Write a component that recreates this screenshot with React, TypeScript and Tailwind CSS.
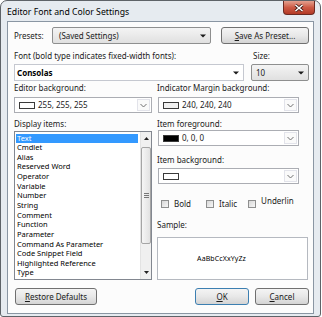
import React from "react";

const items = [
  "Text",
  "Cmdlet",
  "Alias",
  "Reserved Word",
  "Operator",
  "Variable",
  "Number",
  "String",
  "Comment",
  "Function",
  "Parameter",
  "Command As Parameter",
  "Code Snippet Field",
  "Highlighted Reference",
  "Type",
];

function Tri() {
  return (
    <svg width="6" height="4" viewBox="0 0 6 4">
      <path d="M0 0.5h6L3 3.5z" fill="#1a1a1a" />
    </svg>
  );
}

function Chevron() {
  return (
    <svg width="7" height="5" viewBox="0 0 7 5">
      <path d="M0.5 1L3.5 4L6.5 1" fill="none" stroke="#707070" strokeWidth="1" />
    </svg>
  );
}

function ColorCombo({ swatch, label }: { swatch: string; label: string }) {
  return (
    <div className="flex h-[16px] border border-[#abadb3] bg-white">
      <div className="flex flex-1 items-center gap-[3px] pl-[4px]">
        <span className={`h-[7px] w-[16px] border border-[#3a3a3a] ${swatch}`} />
        <span>{label}</span>
      </div>
      <div className="m-[1px] flex w-[13px] items-center justify-center border border-[#e2e3ea] bg-[#fafafa]">
        <Chevron />
      </div>
    </div>
  );
}

function Check({ label, raised }: { label: string; raised?: boolean }) {
  return (
    <div className="flex items-center gap-[5px]">
      <span className="h-[8px] w-[8px] border border-[#8e8f8f] bg-linear-to-br from-[#d8d8d8] to-[#f7f7f7]" />
      <span className={raised ? "-mt-[6px]" : ""}>{label}</span>
    </div>
  );
}

function Btn({ children, w, def }: { children: React.ReactNode; w: string; def?: boolean }) {
  return (
    <div
      className={`flex h-[17px] ${w} items-center justify-center rounded-[3px] border ${
        def ? "border-[#3c7fb1]" : "border-[#707070]"
      } bg-linear-to-b from-[#f4f4f4] via-[#e8e8e8] to-[#d4d4d4]`}
    >
      {children}
    </div>
  );
}

export default function App() {
  return (
    <div className="h-[317px] w-[322px] bg-white font-['Noto_Sans',sans-serif] text-[8px] leading-[10px] text-[#1b1b1b]">
      <div className="flex h-[317px] w-[321px] flex-col rounded-t-[7px] rounded-b-[3px] border border-[#5e6368] bg-[#e6ebf0] px-[6px] pb-[2px]">
        {/* title bar */}
        <div className="flex h-[20px] items-start">
          <span className="mt-[5px] text-[8.7px] leading-[12px] text-black">Editor Font and Color Settings</span>
          <div className="-mr-[1px] ml-auto flex h-[14px] w-[32px] items-center justify-center rounded-b-[4px] border border-t-0 border-[#6b2a22] bg-linear-to-b from-[#e3a08f] via-[#cd5a45] to-[#b33a26]">
            <svg width="10" height="8" viewBox="0 0 10 8">
              <path d="M1.5 1L8.5 7M8.5 1L1.5 7" stroke="#3b1a14" strokeWidth="3" />
              <path d="M1.5 1L8.5 7M8.5 1L1.5 7" stroke="#ffffff" strokeWidth="1.6" />
            </svg>
          </div>
        </div>

        {/* dialog body */}
        <div className="flex flex-1 flex-col border border-[#8a96a3] bg-[#fcfcfc] pt-[5px] pr-[4px] pl-[6px]">
          <div className="flex h-[17px] items-center">
            <span className="w-[38px]">Presets:</span>
            <div className="flex h-[17px] w-[159px] items-center rounded-[2px] border border-[#8e8f8f] bg-linear-to-b from-[#f4f4f4] to-[#e0e0e0] pr-[4px] pl-[6px]">
              <span className="flex-1">(Saved Settings)</span>
              <Tri />
            </div>
            <div className="ml-auto">
              <Btn w="w-[88px]">
                <span>
                  <span className="underline">S</span>ave As Preset...
                </span>
              </Btn>
            </div>
          </div>

          <div className="mt-[7px] flex">
            <span className="flex-1">Font (bold type indicates fixed-width fonts):</span>
            <span className="w-[58px] pl-[2px]">Size:</span>
          </div>

          <div className="mt-[3px] flex h-[17px]">
            <div className="flex w-[230px] items-center border border-[#c5c8d0] bg-white pr-[4px] pl-[2px]">
              <span className="flex-1 text-[8px] font-bold text-black">Consolas</span>
              <Tri />
            </div>
            <div className="ml-auto flex w-[58px] items-center rounded-[2px] border border-[#8e8f8f] bg-linear-to-b from-[#f4f4f4] to-[#e0e0e0] pr-[4px] pl-[4px]">
              <span className="flex-1">10</span>
              <Tri />
            </div>
          </div>

          <div className="mt-[2px] grid grid-cols-[138px_151px] gap-x-[5px]">
            <span>Editor background:</span>
            <span>Indicator Margin background:</span>
            <div className="mt-[4px]">
              <ColorCombo swatch="bg-white" label="255, 255, 255" />
            </div>
            <div className="mt-[4px] mr-[9px] ml-[1px]">
              <ColorCombo swatch="bg-[#f0f0f0]" label="240, 240, 240" />
            </div>
          </div>

          <div className="grid grid-cols-[138px_151px] gap-x-[5px]">
            {/* left column */}
            <div className="flex flex-col">
              <span className="mt-[6px]">Display items:</span>
              <div className="mt-[2px] flex h-[149px] border border-[#828790] bg-white">
                <div className="flex flex-1 flex-col pt-[1.5px] pr-[2px] pl-[1px] text-[7.5px]">
                  {items.map((it, i) => (
                    <span
                      key={it}
                      className={`h-[9.65px] pl-[1px] leading-[9.65px] ${
                        i === 0 ? "bg-[#3399ff] text-white" : "text-black"
                      }`}
                    >
                      {it}
                    </span>
                  ))}
                </div>
                <div className="flex w-[11px] flex-col items-center border-l border-[#e3e3e3] bg-[#f0f0f0]">
                  <div className="flex h-[13px] items-center justify-center">
                    <svg width="5" height="3" viewBox="0 0 5 3">
                      <path d="M0 3L2.5 0L5 3z" fill="#222" />
                    </svg>
                  </div>
                  <div className="mt-[2px] flex h-[97px] w-[10px] items-center justify-center rounded-[2px] border border-[#a5a5a5] bg-linear-to-r from-[#f6f6f6] to-[#e2e2e2]">
                    <div className="flex flex-col gap-[1px]">
                      <span className="h-px w-[5px] bg-[#777]" />
                      <span className="h-px w-[5px] bg-[#777]" />
                      <span className="h-px w-[5px] bg-[#777]" />
                    </div>
                  </div>
                  <div className="mt-auto flex h-[13px] items-center justify-center">
                    <svg width="5" height="3" viewBox="0 0 5 3">
                      <path d="M0 0L2.5 3L5 0z" fill="#222" />
                    </svg>
                  </div>
                </div>
              </div>
            </div>

            {/* right column */}
            <div className="flex flex-col">
              <span className="mt-[6px]">Item foreground:</span>
              <div className="mt-[1px] mr-[9px] ml-[1px]">
                <ColorCombo swatch="bg-black" label="0, 0, 0" />
              </div>
              <span className="mt-[9px]">Item background:</span>
              <div className="mt-[3px] mr-[9px] ml-[1px]">
                <ColorCombo swatch="bg-white" label="" />
              </div>
              <div className="mt-[15px] flex h-[10px] items-center gap-[11px] pl-[4px]">
                <Check label="Bold" />
                <div className="ml-[4px]">
                  <Check label="Italic" />
                </div>
                <Check label="Underlin" raised />
              </div>
              <span className="mt-[11px]">Sample:</span>
              <div className="mt-[7px] flex h-[43px] items-center justify-center border border-[#b5b9c0] bg-white pr-[22px]">
                <span className="text-[7px] tracking-[0.1px] text-black">AaBbCcXxYyZz</span>
              </div>
            </div>
          </div>

          <div className="mt-[8px] flex">
            <div className="ml-[1px]">
              <Btn w="w-[82px]">
                <span>
                  <span className="underline">R</span>estore Defaults
                </span>
              </Btn>
            </div>
            <div className="ml-auto flex gap-[6px]">
              <Btn w="w-[54px]" def>
                <span>
                  <span className="underline">O</span>K
                </span>
              </Btn>
              <Btn w="w-[54px]">
                <span>
                  <span className="underline">C</span>ancel
                </span>
              </Btn>
            </div>
          </div>
        </div>
      </div>
    </div>
  );
}
